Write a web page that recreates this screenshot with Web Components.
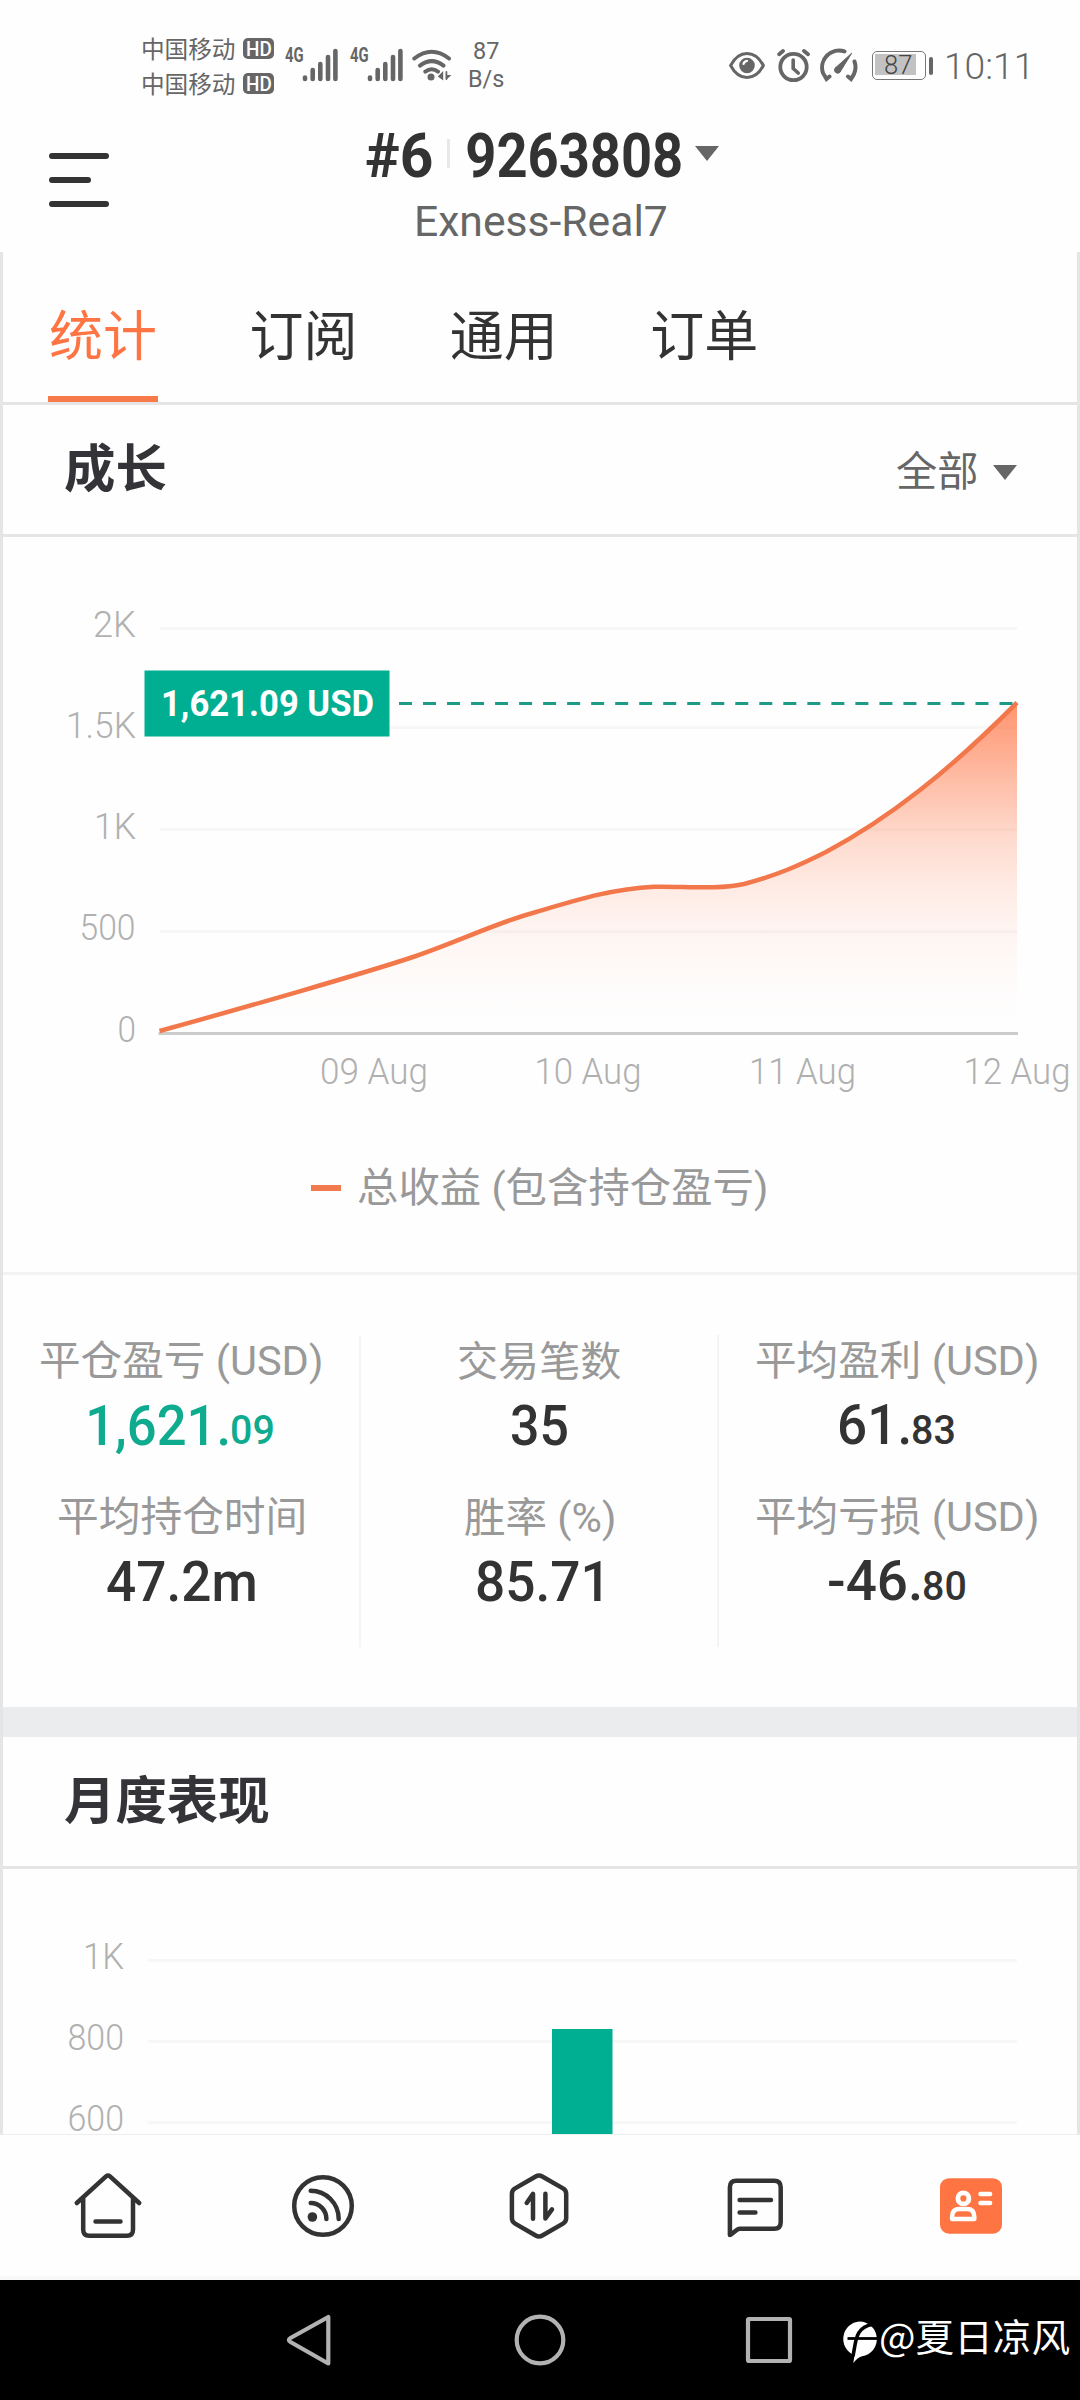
<!DOCTYPE html>
<html lang="zh-CN">
<head>
<meta charset="utf-8">
<title>Exness-Real7</title>
<style>
html,body{margin:0;padding:0}
body{width:1080px;height:2400px;overflow:hidden;background:#fefefe;font-family:Roboto,"Noto Sans CJK SC",sans-serif;color:#333}
</style>
</head>
<body>
<trade-app></trade-app>
<script>
const define = (name, html, after) => {
  const tpl = document.createElement('template');
  tpl.innerHTML = html;
  customElements.define(name, class extends HTMLElement {
    connectedCallback() {
      if (this.shadowRoot) return;
      this.attachShadow({mode: 'open'}).appendChild(tpl.content.cloneNode(true));
      if (after) after.call(this, this.shadowRoot);
    }
  });
};

/* Text whose inked area fills exactly w pixels, with its top on the top of the box. */
const ctx = document.createElement('canvas').getContext('2d');
define('fit-text', `<style>
:host{display:block;flex:none;white-space:nowrap;overflow:visible}
span{display:inline-block;transform-origin:0 0;vertical-align:top;white-space:pre}
</style><span><slot></slot></span>`, function (root) {
  const w = +this.getAttribute('w'), h = +this.getAttribute('h'), fs = +this.getAttribute('fs') || h / 0.711;
  const wt = this.getAttribute('wt') || '400';
  const span = root.querySelector('span');
  this.style.cssText += `;width:${w}px;height:${h}px;line-height:${h}px;font-size:${fs}px;font-weight:${wt}`;
  ctx.font = `${wt} ${fs}px ${getComputedStyle(this).fontFamily}`;
  const m = ctx.measureText(this.textContent.trim());
  /* laid-out width can differ from the canvas width, so scale by their ratio */
  const real = span.getBoundingClientRect().width || m.width;
  const s = w / (m.actualBoundingBoxLeft + m.actualBoundingBoxRight);
  const base = h / 2 + (m.fontBoundingBoxAscent - m.fontBoundingBoxDescent) / 2;
  const lift = this.hasAttribute('fs') ? 0 : Math.min(1.2, h / 36);
  span.style.transform = `matrix(${s * m.width / real},0,0,1,${m.actualBoundingBoxLeft * s},${m.actualBoundingBoxAscent - base - lift})`;
});

define('hd-badge', `<style>:host{display:flex;align-items:center;justify-content:center;width:31px;height:21px;border-radius:5px;background:#666;color:#fff}</style><fit-text w="24" h="14" wt="500">HD</fit-text>`);
define('carrier-line', `<style>:host{display:flex;gap:8px;height:21px}</style><fit-text w="92" h="21" fs="23.5"><slot></slot></fit-text><hd-badge></hd-badge>`, function (root) {
  const n = document.createElement('fit-text');
  n.textContent = this.textContent;
  n.style.marginTop = '-1px';
  n.setAttribute('w', 92); n.setAttribute('h', 21); n.setAttribute('fs', 23.5);
  root.querySelector('fit-text').replaceWith(n);
});
define('cell-signal', `<style>:host{display:flex;width:54px;height:34px}svg{margin-left:-1px;margin-top:0}</style>
<fit-text w="18" h="14.5" wt="700">4G</fit-text>
<svg width="37" height="34" viewBox="0 0 37 34" stroke="#666" stroke-width="4.6" stroke-linecap="round"><path d="M3 29.6v1.4M10.7 22v9M18.3 16v15M26 9v22M33.4 3v28"/></svg>`);
define('status-bar', `<style>
:host{display:flex;height:104px;box-sizing:border-box;padding:38px 53px 0 143px;color:#666}
.col{display:flex;flex-direction:column;gap:14px}
.sig{display:flex;margin:10px 0 0 11px;gap:11px}
.wifi{margin:10px 0 0 8px}
.rate{display:flex;flex-direction:column;align-items:center;gap:11px;margin:5px 0 0 17px}
.sys{display:flex;margin-left:auto;padding-top:10px;align-items:flex-start}
.bat{display:flex;align-items:center;margin:3px 0 0 14px}
.cell{box-sizing:border-box;width:54px;height:29px;border:1.6px solid #777;border-radius:5px;padding:2px;display:flex}
.fill{width:41px;height:21px;background:#c2c2c2;display:flex;align-items:center;padding-left:0;color:#444}
.fill fit-text{margin-left:10px;margin-top:2px}
.nub{width:4px;height:18px;border-radius:2px;background:#666;margin-left:3px}
</style>
<div class="col"><carrier-line>中国移动</carrier-line><carrier-line>中国移动</carrier-line></div>
<div class="sig"><cell-signal></cell-signal><cell-signal></cell-signal></div>
<svg class="wifi" width="40" height="34" viewBox="0 0 40 34" fill="none" stroke="#666" stroke-width="4" stroke-linecap="round"><path d="M2.3 10.5Q19.7-3 37 10.5M8 17.6Q19.7 8.600 31.500 17.600M13.300 23.600Q19.700 19 26 23.600"/><circle cx="19" cy="29" r="3.500" fill="#666" stroke="none"/><path d="M31.200 23v9.500l-5.400-4zM34 32l5.500-5h-5.500z" fill="#666" stroke="none"/><path d="M34.400 24v7" stroke-width="1.800"/></svg>
<div class="rate"><fit-text w="25" h="17">87</fit-text><fit-text w="35" h="17">B/s</fit-text></div>
<div class="sys">
<svg width="36" height="34" viewBox="0 0 36 34" fill="none" stroke="#666" stroke-width="3"><path d="M1.600 17.500C10 1.500 26 1.500 34.400 17.500C26 33.500 10 33.500 1.600 17.500Z" stroke-linejoin="round"/><circle cx="18" cy="17.500" r="7.800" fill="#666" stroke="none"/><path d="M14.500 16a4 4 0 0 1 3.500-3.200" stroke="#fff" stroke-width="2.200" stroke-linecap="round"/></svg>
<svg style="margin-left:12px" width="34" height="36" viewBox="0 0 34 36" fill="none" stroke="#666" stroke-width="3.800" stroke-linecap="round"><circle cx="16.500" cy="19" r="13.200"/><path d="M2.200 6.200L6 3M31 6.200L27 3"/><path d="M16.200 12v8.500l5 4.500" stroke-width="3.600"/></svg>
<svg style="margin-left:9px" width="38" height="36" viewBox="0 0 38 36" fill="none" stroke="#666" stroke-width="4" stroke-linecap="round"><path d="M24.500 3.400A17 17 0 0 0 3 25L6.500 31L9.500 28.500M34.500 13.500A17 17 0 0 1 34 26L31 31L28 28.500"/><path d="M31.500 5.500L21 22.500a3.300 3.300 0 1 1-4.500-3.700z" fill="#666" stroke-width="1"/></svg>
<div class="bat"><div class="cell"><div class="fill"><fit-text w="27" h="18.500" wt="300">87</fit-text></div></div><div class="nub"></div></div>
<fit-text style="margin:5.500px 0 0 14px" w="80" h="26" wt="300">10:11</fit-text>
</div>`);

define('app-header', `<style>
:host{display:flex;height:148px;position:static}
.menu{width:102px;margin-left:49px;padding-top:49px;display:flex;flex-direction:column;gap:18px}
.menu i{width:60px;height:6px;border-radius:3px;background:#333}
.menu i:nth-child(2){width:42px}
.title{display:flex;flex-direction:column;width:500px;margin-left:215px;padding-top:29px}
.acct{display:flex}
.sep{width:3px;height:29px;background:#e8e8e8;margin:6px 17px 0 14.500px}
svg{margin:13px 0 0 14px}
</style>
<div class="menu"><i></i><i></i><i></i></div>
<div class="title"><div class="acct"><fit-text w="66" h="44" wt="700">#6</fit-text><div class="sep"></div><fit-text w="214" h="44" wt="700">9263808</fit-text>
<svg width="24" height="15"><path d="M0 0H24L12 15Z" fill="#666"/></svg></div>
<fit-text style="margin:27px 0 0 51px;color:#666" w="249" h="30">Exness-Real7</fit-text></div>`);

define('nav-tab', `<style>
:host{display:flex;flex-direction:column;align-items:center;width:110px;height:150px;box-sizing:border-box;font-size:54px;line-height:60px;padding-top:56px;margin-right:90.400px;white-space:nowrap}
:host([active]){color:#ff7443}
b{display:none;width:110px;height:6px;background:#f77a4b;margin-top:28px;flex:none}
:host([active]) b{display:block}
</style><span><slot></slot></span><b></b>`);
define('tab-bar', `<style>:host{display:flex;height:150px;padding-left:45px;border-bottom:3px solid #e5e5e5}</style><slot></slot>`);

define('section-head', `<style>
:host{display:flex;justify-content:space-between;height:129px;border-bottom:3px solid #e5e5e5;padding:0 60px 0 61px;color:#333338}
h2{margin:35px 0 0;font-size:51.400px;line-height:60px;font-weight:700}
</style><h2><slot></slot></h2><slot name="action"></slot>`);
define('range-picker', `<style>:host{display:flex;color:#666}svg{margin:60px 0 0 16px}</style>
<fit-text w="80" h="38" fs="41.300"></fit-text><svg width="24" height="15"><path d="M0 0H24L12 15Z" fill="#666"/></svg>`, function (root) {
  const n = document.createElement('fit-text');
  n.textContent = this.textContent;
  n.style.marginTop = '45px';
  n.setAttribute('w', 80); n.setAttribute('h', 38); n.setAttribute('fs', 41.3);
  root.querySelector('fit-text').replaceWith(n);
});

define('growth-chart', `<style>:host{display:flex;flex-direction:column;height:735px;border-bottom:3px solid #f2f3f4}
svg{display:block}
text{font-family:Roboto,sans-serif;font-size:36.600px;font-weight:300;fill:#b0b0b0}
.leg{display:flex;align-items:center;justify-content:center;height:54px;margin-top:24px;color:#999;padding-right:3px}
.leg i{width:30px;height:6px;background:#f27a4f;margin-right:17px}
</style>
<svg width="1074" height="600" viewBox="3 537 1074 600">
<defs><linearGradient id="g" x1="0" y1="703" x2="0" y2="1031" gradientUnits="userSpaceOnUse">
<stop offset="0" stop-color="#ff7443" stop-opacity=".76"/><stop offset=".1" stop-color="#ff7443" stop-opacity=".64"/><stop offset=".3" stop-color="#ff7443" stop-opacity=".39"/><stop offset=".4" stop-color="#ff7443" stop-opacity=".27"/><stop offset=".56" stop-color="#ff7443" stop-opacity=".14"/><stop offset=".7" stop-color="#ff7443" stop-opacity=".065"/><stop offset=".9" stop-color="#ff7443" stop-opacity=".008"/><stop offset="1" stop-color="#ff7443" stop-opacity="0"/></linearGradient></defs>
<path d="M159.500 628.500H1017M159.500 727.500H1017M159.500 829.500H1017M159.500 931.500H1017" stroke="#f7f7f7" stroke-width="3"/>
<path d="M158.500 1033.500H1018" stroke="#ccc" stroke-width="3"/>
<path id="area" fill="url(#g)"/><path id="line" fill="none" stroke="#f2784c" stroke-width="4.500"/>
<path d="M399 703.500H1017" stroke="#1f9a86" stroke-width="3" stroke-dasharray="13 11.020"/>
<rect x="144.500" y="670.500" width="245" height="66" fill="#00ae92"/>
<text x="161" y="716" textLength="213" lengthAdjust="spacingAndGlyphs" style="font-weight:700;fill:#fff">1,621.09 USD</text>
<text x="93" y="637" textLength="43" lengthAdjust="spacingAndGlyphs">2K</text>
<text x="66" y="738" textLength="70" lengthAdjust="spacingAndGlyphs">1.5K</text>
<text x="94" y="839" textLength="42" lengthAdjust="spacingAndGlyphs">1K</text>
<text x="79.500" y="940" textLength="56" lengthAdjust="spacingAndGlyphs">500</text>
<text x="117.500" y="1042" textLength="18.500" lengthAdjust="spacingAndGlyphs">0</text>
<text x="320" y="1084" textLength="108" lengthAdjust="spacingAndGlyphs">09 Aug</text>
<text x="534.500" y="1084" textLength="107" lengthAdjust="spacingAndGlyphs">10 Aug</text>
<text x="749" y="1084" textLength="107" lengthAdjust="spacingAndGlyphs">11 Aug</text>
<text x="963.500" y="1084" textLength="107" lengthAdjust="spacingAndGlyphs">12 Aug</text>
</svg>
<div class="leg"><i></i><fit-text w="408" h="42" fs="41.300">总收益 (包含持仓盈亏)</fit-text></div>`, function (root) {
  const line = 'M159.500 1031C236 1010 370 971.500 413 957C460 941 498 922 537 911.700C580 899 612 889 654 886.700C684 886 715 890 744 884C778 875 800 865 826 852C890 818 950 770 1017 702.700';
  root.getElementById('line').setAttribute('d', line);
  root.getElementById('area').setAttribute('d', line + 'V1031H159.500Z');
});

define('stat-value', `<style>:host{display:flex;align-items:flex-end;height:39px}</style>`, function (root) {
  const add = (a, t, h, gap) => {
    const n = document.createElement('fit-text');
    n.textContent = t; n.setAttribute('w', a); n.setAttribute('h', h); n.setAttribute('wt', 500);
    n.style.marginLeft = gap + 'px';
    root.appendChild(n);
  };
  add(this.getAttribute('iw'), this.getAttribute('int'), 39, 0);
  if (this.getAttribute('frac')) add(this.getAttribute('fw'), this.getAttribute('frac'), 28.5, 4.5);
});
define('stat-cell', `<style>:host{display:flex;flex-direction:column;align-items:center;height:156px;box-sizing:border-box;padding-top:5px}
div{height:66px;display:flex;color:#999}</style><div><slot name="label"></slot></div><slot></slot>`);
define('stat-column', `<style>:host{display:block;width:358px;height:312px;box-sizing:border-box;border-right:2.500px solid #f4f4f5}:host(:last-child){border-color:transparent}</style><slot></slot>`);
define('stats-grid', `<style>:host{display:flex;box-sizing:border-box;padding-top:60px;border-bottom:30px solid #ebeced;height:462px}</style>
<stat-column>
<stat-cell><fit-text slot="label" w="280" h="38" fs="41.300">平仓盈亏 (USD)</fit-text><stat-value style="color:#0fab8f" int="1,621." iw="139" frac="09" fw="41"></stat-value></stat-cell>
<stat-cell><fit-text slot="label" w="245" h="38" fs="41.300">平均持仓时间</fit-text><stat-value int="47.2m" iw="148"></stat-value></stat-cell>
</stat-column>
<stat-column>
<stat-cell><fit-text slot="label" w="163" h="38" fs="41.300">交易笔数</fit-text><stat-value int="35" iw="55"></stat-value></stat-cell>
<stat-cell><fit-text slot="label" w="149" h="38" fs="41.300">胜率 (%)</fit-text><stat-value int="85.71" iw="124"></stat-value></stat-cell>
</stat-column>
<stat-column>
<stat-cell><fit-text slot="label" w="280" h="38" fs="41.300">平均盈利 (USD)</fit-text><stat-value int="61." iw="69" frac="83" fw="41"></stat-value></stat-cell>
<stat-cell><fit-text slot="label" w="280" h="38" fs="41.300">平均亏损 (USD)</fit-text><stat-value int="-46." iw="91" frac="80" fw="41"></stat-value></stat-cell>
</stat-column>`);

define('month-chart', `<style>:host{display:block;height:265px}svg{display:block;overflow:visible}text{font-family:Roboto,sans-serif;font-size:36.600px;font-weight:300;fill:#b0b0b0}</style>
<svg width="1074" height="265" viewBox="3 1869 1074 265"><path d="M148 1960.500H1017M148 2041.500H1017M148 2122.500H1017" stroke="#f7f7f7" stroke-width="3"/>
<rect x="552" y="2029" width="60.500" height="105" fill="#00ae92"/>
<text x="83" y="1969" textLength="41" lengthAdjust="spacingAndGlyphs">1K</text>
<text x="67.500" y="2050" textLength="56.500" lengthAdjust="spacingAndGlyphs">800</text>
<text x="67.500" y="2131" textLength="56.500" lengthAdjust="spacingAndGlyphs">600</text></svg>`);

define('bottom-nav', `<style>:host{display:flex;justify-content:space-between;align-items:center;height:146px;box-sizing:border-box;border-top:1.500px solid #eee;border-bottom:4px solid #f9f9f9;padding:0 73.700px 0 72.500px}
svg{display:block;fill:none;stroke:#333;stroke-width:4.500px;stroke-linecap:round;stroke-linejoin:round}
</style>
<svg width="70" height="70" viewBox="72.500 2170.300 70 70"><path d="M76.300 2202.300L105.500 2175.700Q107.500 2174 109.500 2175.700L138.700 2202.300M82.700 2198V2229Q82.700 2235 88.700 2235H126.500Q132.500 2235 132.500 2229V2198M95 2220.700H120"/></svg>
<svg width="70" height="70" viewBox="288.300 2170.300 70 70"><circle cx="323.300" cy="2205.300" r="28.800"/><circle cx="312.700" cy="2216.300" r="4.800" fill="#333" stroke="none"/><path d="M311 2202.300A15.700 16 0 0 1 326.700 2218.300M311 2190A28 28.300 0 0 1 339 2218.300"/></svg>
<svg width="70" height="70" viewBox="504.300 2170.300 70 70"><path d="M536 2175.800Q539.300 2173.800 542.600 2175.800L563.300 2187.700Q566.500 2189.500 566.500 2193V2217.600Q566.500 2221 563.300 2222.900L542.600 2234.800Q539.300 2236.800 536 2234.800L515.400 2222.900Q512.200 2221 512.200 2217.600V2193Q512.200 2189.500 515.400 2187.700ZM527 2202.300L533.300 2193.200V2218M545.700 2193V2217.700L552.300 2208.700"/></svg>
<svg width="70" height="70" viewBox="720.300 2170.300 70 70"><path d="M730.200 2234.200V2186.500Q730.200 2180 736.500 2180H774.500Q781 2180 781 2186.500V2221.500Q781 2228 774.500 2228H740Q738.500 2228 737 2229.300L731.200 2233.900M739.900 2199.300H771.300M739.900 2211.700H755.700"/></svg>
<svg width="70" height="70" viewBox="936.300 2170.300 70 70"><rect x="940.300" y="2177.500" width="62" height="55.500" rx="9" fill="#ff7443" stroke="none"/><g stroke="#fff"><circle cx="963.700" cy="2197.700" r="5.500" style="stroke-width:4.800px"/><path d="M952.400 2218.300V2216Q952.400 2208.300 960 2208.300H967Q974.600 2208.300 974.600 2216V2218.300Z"/><path d="M980.800 2193.300H990.400M980.800 2202.300H990.400"/></g></svg>`);

define('system-nav', `<style>:host{display:flex;height:120px;background:#000;color:#fff;align-items:flex-start}
svg{display:block;flex:none}
.k{fill:none;stroke:#b2b2b2;stroke-width:4.200px;stroke-linejoin:round}
</style>
<svg class="k" style="margin:32px 0 0 284px" width="48" height="56" viewBox="284 2312 48 56"><path d="M328.300 2317V2363.500L290.500 2342Q287.300 2340 290.500 2338Z"/></svg>
<svg class="k" style="margin:32px 0 0 180px" width="56" height="56" viewBox="512 2312 56 56"><circle cx="540" cy="2340" r="23.300"/></svg>
<svg class="k" style="margin:32px 0 0 174px" width="54" height="56" viewBox="742 2312 54 56"><rect x="748" y="2319" width="42" height="42" rx="1"/></svg>
<svg style="margin:38px 0 0 44px" width="40" height="50" viewBox="840 2318 40 50"><path d="M859.500 2321.500A17.500 17.500 0 0 1 862 2356.300Q857 2358 853.300 2363L854.500 2355.300A17.500 17.500 0 0 1 859.500 2321.500Z" fill="#fff"/><path d="M853 2356C856 2342 855 2326.500 873 2324.500" stroke="#000" stroke-width="3.600" fill="none"/><path d="M847.500 2338.500H878" stroke="#000" stroke-width="2.800" fill="none"/></svg>
<fit-text style="margin:37.500px 0 0 1px;font-family:'Noto Sans CJK SC',sans-serif" w="188" h="38" fs="38">@夏日凉风</fit-text>`);

define('trade-app', `<style>
:host{display:flex;flex-direction:column;width:1080px;height:2400px}
main{display:flex;flex-direction:column;height:1882px;box-sizing:border-box;border:solid #e5e5e5;border-width:0 3px}
main>*{flex:none;box-sizing:content-box}
growth-chart,stats-grid{box-sizing:border-box}
growth-chart{height:738px}stats-grid{height:462px}
</style>
<status-bar></status-bar><app-header></app-header>
<main>
<tab-bar><nav-tab active>统计</nav-tab><nav-tab>订阅</nav-tab><nav-tab>通用</nav-tab><nav-tab>订单</nav-tab></tab-bar>
<section-head>成长<range-picker slot="action">全部</range-picker></section-head>
<growth-chart></growth-chart>
<stats-grid></stats-grid>
<section-head>月度表现</section-head>
<month-chart></month-chart>
</main>
<bottom-nav></bottom-nav><system-nav></system-nav>`);
</script>
</body>
</html>
